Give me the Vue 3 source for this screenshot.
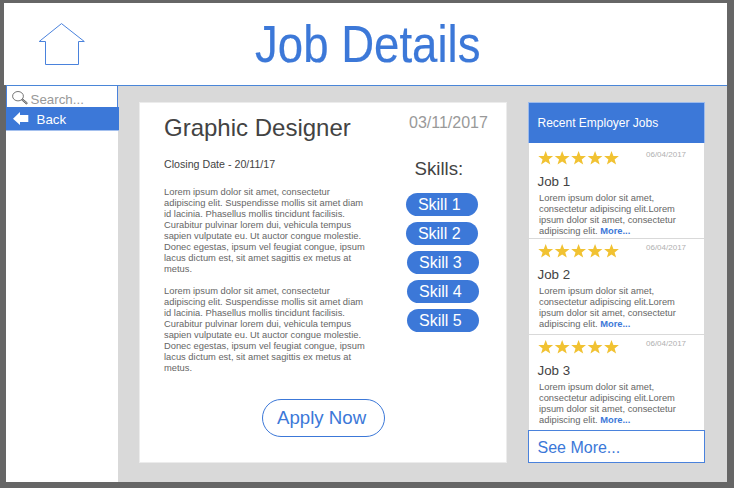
<script setup>
const sentence = `Lorem ipsum dolor sit amet, consectetur
adipiscing elit. Suspendisse mollis sit amet diam
id lacinia. Phasellus mollis tincidunt facilisis.
Curabitur pulvinar lorem dui, vehicula tempus
sapien vulputate eu. Ut auctor congue molestie.
Donec egestas, ipsum vel feugiat congue, ipsum
lacus dictum est, sit amet sagittis ex metus at
metus.`
const paragraphs = [sentence, sentence]
const skills = ['Skill 1', 'Skill 2', 'Skill 3', 'Skill 4', 'Skill 5']
const summary = `Lorem ipsum dolor sit amet,
consectetur adipiscing elit.Lorem
ipsum dolor sit amet, consectetur`
const jobs = [
  { title: 'Job 1', date: '06/04/2017' },
  { title: 'Job 2', date: '06/04/2017' },
  { title: 'Job 3', date: '06/04/2017' },
]
const starOffsets = [0, 16.45, 32.9, 49.35, 65.8]
</script>

<template>
  <div class="screen">
    <header class="top">
      <svg class="home" width="48" height="44" viewBox="0 0 48 44">
        <path d="M1.2 18.5 L23.5 .6 L46.3 18.5 H40.5 V41.5 H7.5 V18.5 Z" fill="none" stroke="#4a82dc" stroke-width="1" />
      </svg>
      <h1>Job Details</h1>
    </header>
    <div class="body">
      <nav class="side">
        <div class="search">
          <svg width="18" height="16" viewBox="0 0 18 16">
            <ellipse cx="6" cy="5.2" rx="5.4" ry="4.7" fill="none" stroke="#666" stroke-width=".9" />
            <path d="M9.6 8.9 L10.8 8 L15.4 11.9 L14.4 13.2 Z" fill="#aaa" stroke="#666" stroke-width=".9" />
          </svg>
          <span>Search...</span>
        </div>
        <div class="back">
          <svg width="16" height="14" viewBox="0 0 16 14">
            <path d="M0 6.7 L7 0 V3 H15.3 V10 H7 V13.1 Z" fill="#fff" />
          </svg>
          <span>Back</span>
        </div>
      </nav>
      <main class="card">
        <section class="info">
          <h2>Graphic Designer</h2>
          <p class="closing">Closing Date - 20/11/17</p>
          <p v-for="(p, i) in paragraphs" :key="i" class="para">{{ p }}</p>
          <button class="apply">Apply Now</button>
        </section>
        <aside class="skills">
          <p class="date">03/11/2017</p>
          <h3>Skills:</h3>
          <ul>
            <li v-for="s in skills" :key="s">{{ s }}</li>
          </ul>
        </aside>
      </main>
      <aside class="recent">
        <h4>Recent Employer Jobs</h4>
        <article v-for="job in jobs" :key="job.title">
          <div class="meta">
            <svg width="82" height="14" viewBox="0 0 82 14">
              <path
                v-for="x in starOffsets"
                :key="x"
                :transform="`translate(${x} 0)`"
                d="M7.7 0 L9.6 4.9 L15.1 5.1 L10.8 8.4 L12.3 13.5 L7.7 10.6 L3.1 13.5 L4.6 8.4 L.3 5.1 L5.8 4.9 Z"
                fill="#f1c232"
              />
            </svg>
            <time>{{ job.date }}</time>
          </div>
          <h5>{{ job.title }}</h5>
          <p>{{ summary }}</p>
          <div class="last"><span>adipiscing elit.</span><b>More...</b></div>
        </article>
        <div class="more">See More...</div>
      </aside>
    </div>
  </div>
</template>

<style>
body {
  background: #666;
}
</style>

<style scoped>
.screen,
.screen * {
  box-sizing: border-box;
}
.screen {
  width: 734px;
  height: 488px;
  padding: 3px 7px 6px 4px;
  overflow: hidden;
  background: #666;
  font-family: "Liberation Sans", Arial, sans-serif;
  color: #434343;
  white-space: nowrap;
}
h1, h2, h3, h4, h5, p, ul {
  margin: 0;
  padding: 0;
  font-weight: normal;
  list-style: none;
}
svg {
  display: block;
  flex: none;
}
.top {
  display: flex;
  height: 82px;
  background: #fff;
}
.home {
  margin: 20px 0 0 34px;
}
h1 {
  margin: 11px 0 0 168.5px;
  font-size: 51.5px;
  line-height: 60px;
  color: #3c78d8;
  -webkit-text-stroke: .2px #3c78d8;
  transform: scaleX(.885);
  transform-origin: 0 0;
}
.body {
  display: flex;
  height: 397px;
  margin-left: 2px;
  border-top: 1px solid #4a86d8;
  background: #d9d9d9;
}
.side {
  width: 112px;
  background: #fff;
}
.search {
  display: flex;
  height: 21px;
  padding: 5px 0 0 5px;
  border: 1px solid #4a82dc;
  border-width: 0 1px 0 1px;
}
.search span {
  margin-left: .5px;
  font-size: 13.33px;
  line-height: 18px;
  color: #999;
}
.back {
  display: flex;
  width: 112.5px;
  height: 24px;
  padding: 5px 0 0 7px;
  background: #3c78d8;
  border-bottom: 1px solid #a4c0ee;
  color: #fff;
}
.back span {
  margin-left: 7.5px;
  font-size: 13.33px;
  line-height: 16px;
}
.card {
  display: flex;
  width: 368px;
  height: 361px;
  margin: 16px 0 0 21px;
  background: #fff;
  border: 1px solid #ececec;
}
.info {
  width: 265px;
  padding: 11px 0 0 24px;
}
h2 {
  font-size: 24px;
  line-height: 28px;
}
.closing {
  margin: 16px 0 17px;
  font-size: 10.67px;
  line-height: 12px;
}
.para {
  font-size: 9.33px;
  line-height: 11px;
  color: #666;
  white-space: pre;
}
.para + .para {
  margin-top: 11px;
}
.apply {
  display: block;
  width: 123px;
  height: 38px;
  margin: 25px 0 0 98px;
  padding: 0 0 0 14px;
  border: 1px solid #3c78d8;
  border-radius: 19px;
  background: #fff;
  color: #3c78d8;
  font-family: inherit;
  font-size: 18.67px;
  line-height: 36px;
  text-align: left;
}
.skills {
  padding-top: 11px;
}
.date {
  margin-left: 4px;
  font-size: 16px;
  line-height: 18px;
  color: #999;
}
h3 {
  margin: 26px 0 0 9.5px;
  font-size: 18.67px;
  line-height: 22px;
}
.skills ul {
  display: grid;
  gap: 6.1px;
  margin-top: 13px;
}
li {
  width: 72px;
  height: 23px;
  margin-left: .6px;
  padding-left: 12.3px;
  border-radius: 12px;
  background: #3c78d8;
  color: #fff;
  font-size: 16px;
  line-height: 24px;
}
li:nth-child(n + 3) {
  margin-left: 1.7px;
}
.recent {
  width: 177px;
  margin: 16px 0 0 21px;
}
h4 {
  height: 41px;
  padding-left: 8.5px;
  border: 1px solid #9dbbec;
  border-width: 1px 1px 0;
  background: #3c78d8;
  color: #fff;
  font-size: 12px;
  line-height: 41px;
}
article {
  height: 96px;
  margin: 0 1px;
  padding: 5px 0 0 9px;
  border-bottom: 1px solid #d9d9d9;
  background: #fff;
}
h4 + article {
  padding-top: 8px;
}
article:nth-of-type(3) {
  height: 95px;
  border: 0;
}
.meta {
  display: flex;
  height: 14px;
}
.meta time {
  margin: -1px 0 0 26px;
  font-size: 8px;
  line-height: 10px;
  color: #b0b0b0;
}
h5 {
  margin-top: 9px;
  margin-left: -.5px;
  font-size: 13.33px;
  line-height: 16px;
}
article p {
  margin: 3px 0 0 1px;
  font-size: 9.33px;
  line-height: 11px;
  color: #666;
  white-space: pre;
}
.last {
  display: flex;
  gap: 2.6px;
  margin-left: 1px;
  font-size: 9.33px;
  line-height: 11px;
  color: #666;
}
article b {
  color: #3c78d8;
}
.more {
  height: 33px;
  padding-left: 8.5px;
  border: 1px solid #4a82dc;
  background: #fff;
  color: #3c78d8;
  font-size: 16px;
  line-height: 33px;
}
</style>
